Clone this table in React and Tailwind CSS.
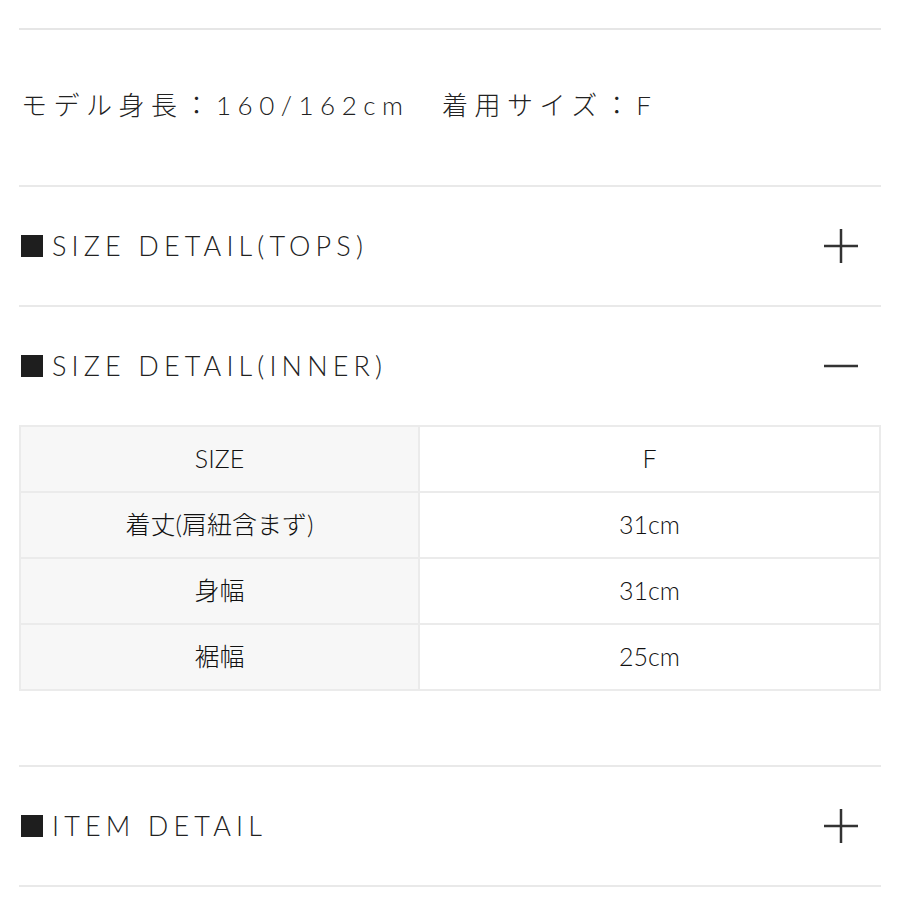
import React, { useState } from 'react';

const rows = [
    { label: 'SIZE', value: 'F' },
    { label: '着丈(肩紐含まず)', value: '31cm' },
    { label: '身幅', value: '31cm' },
    { label: '裾幅', value: '25cm' },
];

const PlusMinus = ({ open }) => (
    <svg width="36" height="36" viewBox="0 0 36 36" className="text-[#333]">
        <line x1="1" y1="18" x2="35" y2="18" stroke="currentColor" strokeWidth="2.5" />
        {!open && <line x1="18" y1="1" x2="18" y2="35" stroke="currentColor" strokeWidth="2.5" />}
    </svg>
);

const SectionHeader = ({ title, open, onToggle }) => (
    <button
        type="button"
        onClick={onToggle}
        className="w-full h-[118px] flex items-center justify-between pl-[2px] pr-[22px] text-left"
    >
        <span className="flex items-center text-[27px] font-light tracking-[0.19em] text-[#222]">
            <span className="inline-block w-[22px] h-[22px] bg-[#1e1e1e] mr-[9px]" />
            {title}
        </span>
        <PlusMinus open={open} />
    </button>
);

export default function App() {
    const [open, setOpen] = useState({ tops: false, inner: true, item: false });
    const toggle = (key) => setOpen({ ...open, [key]: !open[key] });

    return (
        <div
            className="min-h-[900px] bg-white px-[19px] pt-[28px] text-[#222]"
            style={{ fontFamily: 'Lato, "Noto Sans CJK JP", sans-serif' }}
        >
            <div className="border-t-2 border-[#e6e6e6] h-[157px] flex items-center pl-[2px] pb-[4px]">
                <p className="text-[26px] font-light tracking-[0.25em]">
                    モデル身長：160/162cm　着用サイズ：F
                </p>
            </div>

            <div className="border-t-2 border-[#e9e9e9]">
                <SectionHeader title="SIZE DETAIL(TOPS)" open={open.tops} onToggle={() => toggle('tops')} />
            </div>

            <div className="border-t-2 border-[#e9e9e9]">
                <SectionHeader title="SIZE DETAIL(INNER)" open={open.inner} onToggle={() => toggle('inner')} />
                {open.inner && (
                    <div className="pb-[74px]">
                        <table className="w-full border-collapse border-2 border-[#ebebeb] text-[25px] font-light text-[#111]">
                            <tbody>
                                {rows.map((r) => (
                                    <tr key={r.label} className="h-[66px]">
                                        <td className="w-[399px] bg-[#f7f7f7] border-2 border-[#ebebeb] text-center align-middle">
                                            {r.label}
                                        </td>
                                        <td className="bg-white border-2 border-[#ebebeb] text-center align-middle">
                                            {r.value}
                                        </td>
                                    </tr>
                                ))}
                            </tbody>
                        </table>
                    </div>
                )}
            </div>

            <div className="border-t-2 border-[#e9e9e9]">
                <SectionHeader title="ITEM DETAIL" open={open.item} onToggle={() => toggle('item')} />
            </div>
            <div className="border-t-2 border-[#e9e9e9]" />
        </div>
    );
}
